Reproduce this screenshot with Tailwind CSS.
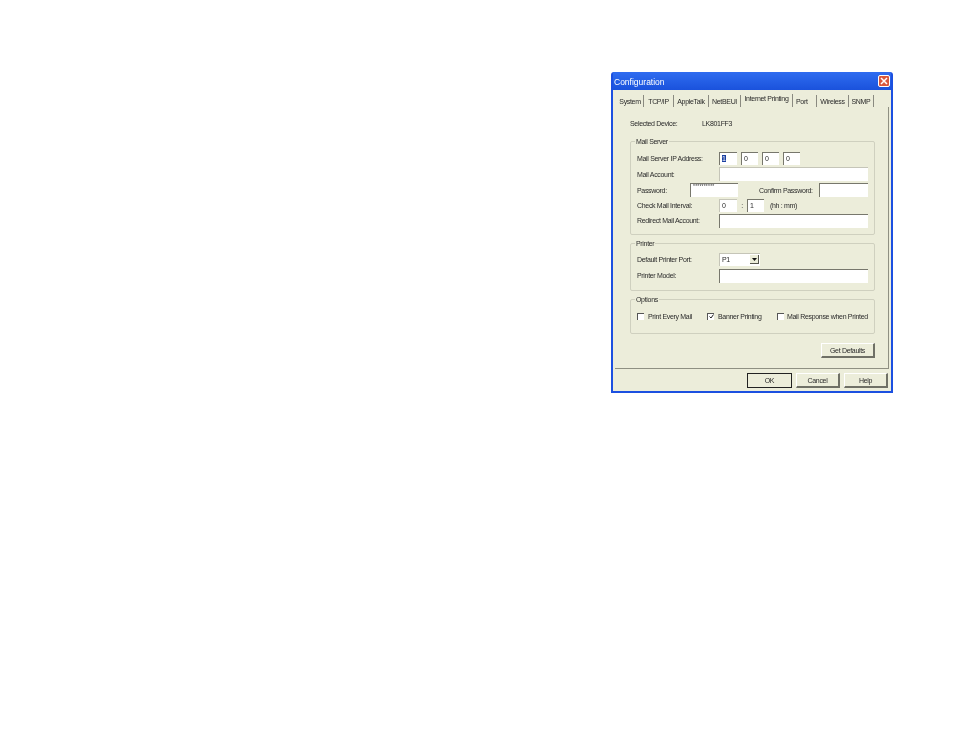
<!DOCTYPE html>
<html lang="en">
<head>
    <meta charset="UTF-8">
    <title>Configuration</title>
    <script src="https://cdn.jsdelivr.net/npm/@tailwindcss/browser@4"></script>
</head>
<body class="bg-white h-[738px] w-[954px] overflow-hidden font-['Liberation_Sans',Arial,sans-serif] text-[7px] leading-[9px] tracking-[-0.32px] text-[#2a2a2a]">
    <div class="pt-[72px] pl-[611px]">
        <!-- Window -->
        <div class="w-[282px] h-[321px] bg-[#1c50e0] rounded-t-[3px] p-[2px] pt-0 flex flex-col blur-[0.3px]">
            <!-- Title bar -->
            <div class="h-[18px] shrink-0 flex items-center justify-between pl-[1px] pr-[1px] bg-gradient-to-b from-[#2f6cf0] to-[#1a52dc]">
                <span class="text-white text-[8.5px] tracking-normal pt-[2px]">Configuration</span>
                <div class="w-[12px] h-[12px] rounded-[2px] bg-[#d9583c] border border-white flex items-center justify-center">
                    <svg width="8" height="8" viewBox="0 0 8 8"><path d="M1 1l6 6M7 1L1 7" stroke="#fff" stroke-width="1.5"/></svg>
                </div>
            </div>

            <div class="flex-1 bg-[#ecedda] flex flex-col px-[2px]">
                <!-- Tabs -->
                <div class="h-[17px] shrink-0 flex items-end pl-[2px] pt-[4px]">
                    <div class="h-[12px] w-[27px] flex items-center justify-center border-r border-[#8a8a80]">System</div>
                    <div class="h-[12px] w-[30px] flex items-center justify-center border-r border-[#8a8a80]">TCP/IP</div>
                    <div class="h-[12px] w-[35px] flex items-center justify-center border-r border-[#8a8a80]">AppleTalk</div>
                    <div class="h-[12px] w-[32px] flex items-center justify-center border-r border-[#8a8a80]">NetBEUI</div>
                    <div class="h-[13px] w-[52px] flex items-start justify-center border-r border-[#8a8a80]">Internet Printing</div>
                    <div class="h-[12px] w-[24px] flex items-center pl-[3px] border-r border-[#8a8a80]">Port</div>
                    <div class="h-[12px] w-[32px] flex items-center justify-center border-r border-[#8a8a80]">Wireless</div>
                    <div class="h-[12px] w-[25px] flex items-center justify-center border-r border-[#8a8a80]">SNMP</div>
                </div>

                <!-- Tab panel -->
                <div class="w-[274px] h-[262px] shrink-0 border-r border-b border-[#8f9082] pl-[15px] pr-[13px] pt-[12px] flex flex-col">
                    <div class="flex h-[9px]">
                        <span class="w-[72px]">Selected Device:</span>
                        <span>LK801FF3</span>
                    </div>

                    <!-- Mail Server -->
                    <fieldset class="mt-[9px] h-[98px] border border-[#cfd0bf] rounded-[2px] pl-[6px] pr-[6px]">
                        <legend class="ml-[-2px] px-[1px]">Mail Server</legend>
                        <div class="flex items-center h-[16px] mt-[4px]">
                            <span class="w-[82px]">Mail Server IP Address:</span>
                            <div class="flex gap-[4px]">
                                <div class="w-[18px] h-[13px] bg-white border-t border-l border-[#77776c] pl-[2px] leading-[11px]"><span class="bg-[#1a3fa0] text-white">1</span></div>
                                <div class="w-[17px] h-[13px] bg-white border-t border-l border-[#77776c] pl-[2px] leading-[11px]">0</div>
                                <div class="w-[17px] h-[13px] bg-white border-t border-l border-[#77776c] pl-[2px] leading-[11px]">0</div>
                                <div class="w-[17px] h-[13px] bg-white border-t border-l border-[#77776c] pl-[2px] leading-[11px]">0</div>
                            </div>
                        </div>
                        <div class="flex items-center h-[16px]">
                            <span class="w-[82px]">Mail Account:</span>
                            <div class="w-[149px] h-[14px] bg-white border-t border-l border-[#c5c5b8]"></div>
                        </div>
                        <div class="flex items-center h-[16px]">
                            <span class="w-[53px]">Password:</span>
                            <div class="w-[48px] h-[14px] bg-white border-t border-l border-[#77776c] pl-[2px] text-[5px] leading-[5px] tracking-[0.2px]">**********</div>
                            <span class="w-[81px] pl-[21px]">Confirm Password:</span>
                            <div class="w-[49px] h-[14px] bg-white border-t border-l border-[#77776c]"></div>
                        </div>
                        <div class="flex items-center h-[15px]">
                            <span class="w-[82px]">Check Mail Interval:</span>
                            <div class="w-[18px] h-[13px] bg-white border-t border-l border-[#c5c5b8] pl-[2px] leading-[11px]">0</div>
                            <span class="w-[10px] text-center">:</span>
                            <div class="w-[17px] h-[13px] bg-white border-t border-l border-[#77776c] pl-[2px] leading-[11px]">1</div>
                            <span class="pl-[6px]">(hh : mm)</span>
                        </div>
                        <div class="flex items-center h-[15px]">
                            <span class="w-[82px]">Redirect Mail Account:</span>
                            <div class="w-[149px] h-[14px] bg-white border-t border-l border-[#77776c]"></div>
                        </div>
                    </fieldset>

                    <!-- Printer -->
                    <fieldset class="mt-[4px] h-[52px] border border-[#cfd0bf] rounded-[2px] pl-[6px] pr-[6px]">
                        <legend class="ml-[-2px] px-[1px]">Printer</legend>
                        <div class="flex items-center h-[16px] mt-[3px]">
                            <span class="w-[82px]">Default Printer Port:</span>
                            <div class="w-[41px] h-[13px] bg-white border-t border-l border-[#c5c5b8] pl-[2px] pr-[1px] flex items-center justify-between">
                                <span>P1</span>
                                <div class="w-[9px] h-[9px] bg-[#ecedda] border-r border-b border-[#55554c] flex items-center justify-center">
                                    <svg width="5" height="3" viewBox="0 0 5 3"><path d="M0 0h5L2.5 3z" fill="#111"/></svg>
                                </div>
                            </div>
                        </div>
                        <div class="flex items-center h-[17px]">
                            <span class="w-[82px]">Printer Model:</span>
                            <div class="w-[149px] h-[14px] bg-white border-t border-l border-[#77776c]"></div>
                        </div>
                    </fieldset>

                    <!-- Options -->
                    <fieldset class="mt-[4px] h-[39px] border border-[#cfd0bf] rounded-[2px] pl-[6px] pr-[6px]">
                        <legend class="ml-[-2px] px-[1px]">Options</legend>
                        <div class="flex items-center h-[16px] mt-[4px] whitespace-nowrap">
                            <div class="flex items-center w-[70px] gap-[4px]">
                                <div class="w-[7px] h-[7px] bg-white border-t border-l border-[#555]"></div>
                                <span>Print Every Mail</span>
                            </div>
                            <div class="flex items-center w-[70px] gap-[4px]">
                                <div class="w-[7px] h-[7px] bg-white border-t border-l border-[#555] flex items-center justify-center">
                                    <svg width="5" height="5" viewBox="0 0 5 5"><path d="M0.5 2.5l1.5 1.5 2.5-3.5" fill="none" stroke="#222" stroke-width="1"/></svg>
                                </div>
                                <span>Banner Printing</span>
                            </div>
                            <div class="flex items-center gap-[3px]">
                                <div class="w-[7px] h-[7px] bg-white border-t border-l border-[#555]"></div>
                                <span>Mail Response when Printed</span>
                            </div>
                        </div>
                    </fieldset>

                    <div class="flex justify-end mt-[9px]">
                        <button class="w-[54px] h-[15px] bg-[#ecedda] border-t border-l border-r-2 border-b-2 border-t-white border-l-white border-r-[#6f7066] border-b-[#6f7066]">Get Defaults</button>
                    </div>
                </div>

                <!-- Bottom buttons -->
                <div class="flex-1 flex justify-end items-center gap-[4px] pr-[1px] pt-[1px]">
                    <button class="w-[45px] h-[15px] bg-[#ecedda] border border-[#222]">OK</button>
                    <button class="w-[44px] h-[15px] bg-[#ecedda] border-t border-l border-r-2 border-b-2 border-t-white border-l-white border-r-[#6f7066] border-b-[#6f7066]">Cancel</button>
                    <button class="w-[44px] h-[15px] bg-[#ecedda] border-t border-l border-r-2 border-b-2 border-t-white border-l-white border-r-[#6f7066] border-b-[#6f7066]">Help</button>
                </div>
            </div>
        </div>
    </div>
</body>
</html>
